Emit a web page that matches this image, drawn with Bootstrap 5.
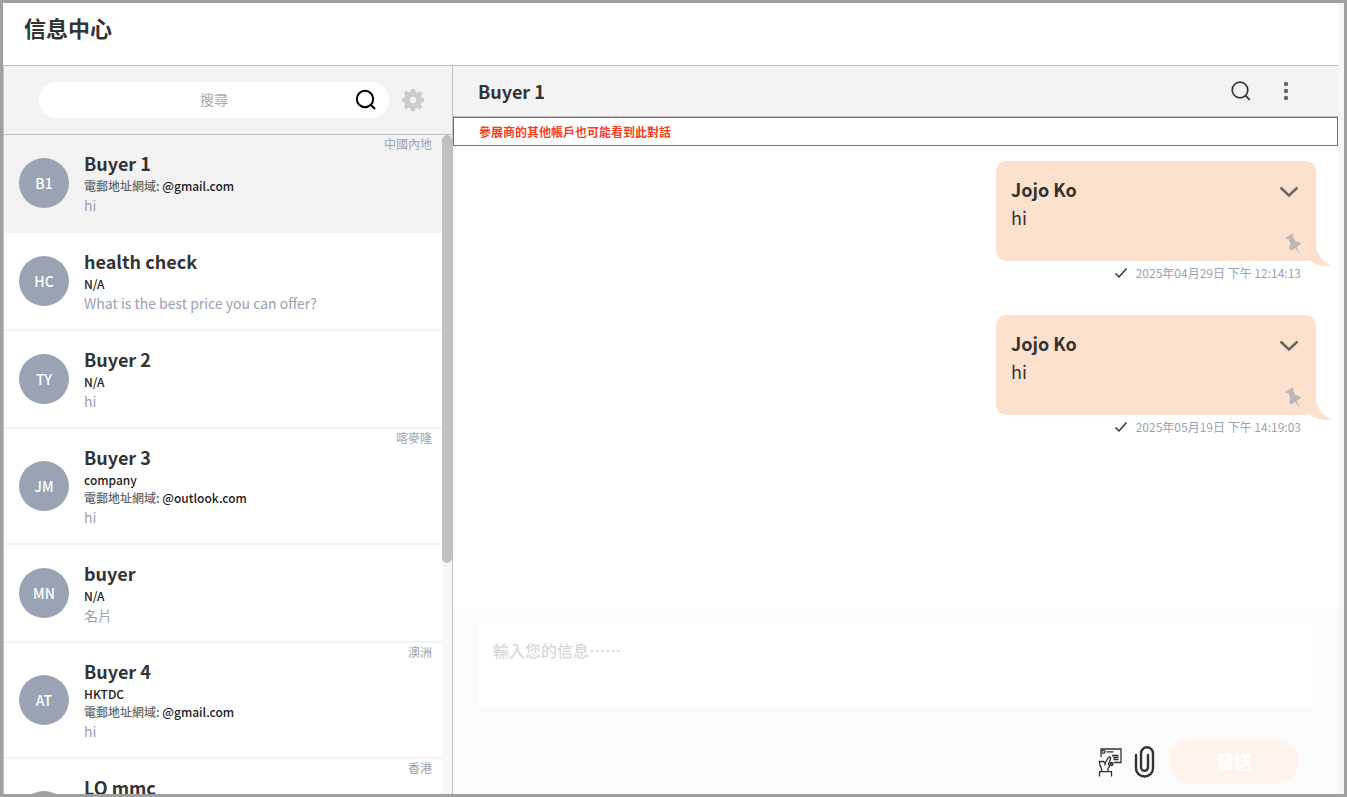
<!DOCTYPE html>
<html lang="zh-Hant">
<head>
<meta charset="utf-8">
<meta name="viewport" content="width=device-width, initial-scale=1">
<title>信息中心</title>
<link href="https://cdn.jsdelivr.net/npm/bootstrap@5.3.0/dist/css/bootstrap.min.css" rel="stylesheet">
<style>
  body { font-family: "Noto Sans CJK TC", sans-serif; color: #333; background: #fff; }
  .app-frame { height: 100vh; border: 3px solid #a0a0a0; }
  .page-track { flex: 0 0 6px; background: #f7f7f7; }
  .page-head { height: 63px; padding: 8px 21px; border-bottom: 1px solid #c1c1c1; }
  .page-head h1 { font-size: 22px; line-height: 32px; font-weight: 700; }
  .side-pane { flex: 0 0 450px; border: solid #c1c1c1; border-width: 0 1px; }
  .search-row { height: 69px; padding: 0 0 0 35px; background: #f3f3f3; border-bottom: 1px solid #c1c1c1; }
  .search-pill { width: 350px; }
  .search-pill input { height: 36px; border: 0; border-radius: 18px; padding: 5px 12px 7px; font-size: 14px; text-align: center; }
  .search-pill input::placeholder { color: #aaa; opacity: 1; }
  .search-pill button { right: 12px; top: 7px; }
  .bare { border: 0; padding: 0; background: none; line-height: 0; }
  .contact { gap: 15px; padding: 14px 15px; border-bottom: 2px solid #f3f3f3; color: #333; text-decoration: none; }
  .contact.current { background: #f3f3f3; }
  .contact-tall { min-height: 116px; }
  .contact-text { padding-bottom: 2px; }
  .avatar { flex: 0 0 50px; height: 50px; border-radius: 50%; background: #99a3b3; color: #fff; font-size: 14px; font-weight: 500; }
  .who { font-size: 18px; line-height: 28px; font-weight: 700; }
  .meta { font-size: 12px; line-height: 18px; font-weight: 500; color: #222; }
  .meta span { color: #666; }
  .last { font-size: 14px; line-height: 20px; color: #9b9fb3; }
  .region { top: 0; right: 10px; font-size: 12px; line-height: 18px; color: #99a3b3; }
  .side-track { flex: 0 0 10px; background: #f7f7f7; }
  .side-thumb { height: 65%; border-radius: 5px; background: #c1c1c1; }
  .chat-head { height: 51px; padding: 0 44px 0 25px; background: #f3f3f3; border-bottom: 1px solid #c1c1c1; }
  .chat-head h2 { font-size: 18px; line-height: 28px; font-weight: 700; }
  .chat-tools { gap: 27px; }
  .notice { border: 1px solid #f5401f; color: #f5401f; padding: 5px 25px 4px; font-size: 12px; line-height: 18px; font-weight: 700; }
  .messages { padding: 15px 22px; }
  .msg { width: 320px; margin-bottom: 30px; }
  .bubble { height: 100px; padding: 14px 15px; border-radius: 10px; background: #fde1cf; }
  .bubble p { font-size: 18px; line-height: 28px; }
  .tail { left: 312px; top: 86px; }
  .toggle { right: 17px; top: 22px; }
  .pin { right: 13px; top: 72px; }
  .stamp { height: 24px; padding-right: 15px; font-size: 12px; color: #99a3b3; }
  .composer { height: 186px; padding: 15px 25px 10px; background: #fbfbfb; }
  .composer textarea { height: 83px; border: 0; border-radius: 4px; padding: 14px 15px; font-size: 16px; line-height: 26px; font-weight: 500; resize: none; }
  .composer textarea::placeholder { color: #d8d8d8; opacity: 1; }
  .composer-tools { gap: 12px; padding-right: 14px; }
  .send { width: 130px; height: 45px; border: 0; border-radius: 23px; background: #fff3ee; color: #fff; font-size: 18px; font-weight: 700; }
</style>
</head>
<body>
<div class="app-frame d-flex overflow-hidden">
  <div class="d-flex flex-column flex-grow-1 overflow-hidden">
    <header class="page-head flex-shrink-0"><h1 class="m-0">信息中心</h1></header>
    <div class="d-flex flex-grow-1 overflow-hidden">
      <aside class="side-pane d-flex flex-column">
        <div class="search-row d-flex align-items-center flex-shrink-0">
          <div class="search-pill position-relative">
            <input class="form-control" type="text" placeholder="搜尋" aria-label="搜尋">
            <button class="bare position-absolute" type="button" aria-label="搜尋">
              <svg width="22" height="22" viewBox="0 0 22 22" fill="none" stroke="#000" stroke-width="2"><circle cx="10" cy="10" r="8.2"/><path d="M15.500 15.500l4.500 4.500"/></svg>
            </button>
          </div>
          <button class="bare ms-2 ps-1" type="button" aria-label="設定">
            <svg width="24" height="24" viewBox="0 0 24 24" fill="#ccc"><path fill-rule="evenodd" d="M10 1h4l.6 2.900 1.700.8 2.600-1.700 2.600 2.600-1.700 2.600.8 1.700L23 10v4l-2.700.6-.7 1.700 1.700 2.600-2.700 2.600-2.500-1.700-1.800.8L13.800 23.200h-3.600l-.6-2.700-1.800-.8-2.500 1.700-2.700-2.600 1.700-2.600-.8-1.700L1 14v-4l2.500-.6.8-1.700-1.700-2.600 2.700-2.600 2.500 1.700 1.700-.8zM12 8.800a3.200 3.200 0 1 0 0 6.400 3.200 3.200 0 0 0 0-6.400z"/></svg>
          </button>
        </div>
        <div class="d-flex flex-grow-1 overflow-hidden">
          <nav class="flex-grow-1 overflow-hidden" aria-label="對話">
            <a href="#" class="contact current position-relative d-flex align-items-center">
              <div class="avatar d-flex align-items-center justify-content-center">B1</div>
              <div class="contact-text"><div class="who">Buyer 1</div><div class="meta"><span>電郵地址網域:</span> @gmail.com</div><div class="last">hi</div></div>
              <div class="region position-absolute">中國內地</div>
            </a>
            <a href="#" class="contact position-relative d-flex align-items-center">
              <div class="avatar d-flex align-items-center justify-content-center">HC</div>
              <div class="contact-text"><div class="who">health check</div><div class="meta">N/A</div><div class="last">What is the best price you can offer?</div></div>
            </a>
            <a href="#" class="contact position-relative d-flex align-items-center">
              <div class="avatar d-flex align-items-center justify-content-center">TY</div>
              <div class="contact-text"><div class="who">Buyer 2</div><div class="meta">N/A</div><div class="last">hi</div></div>
            </a>
            <a href="#" class="contact position-relative d-flex align-items-center">
              <div class="avatar d-flex align-items-center justify-content-center">JM</div>
              <div class="contact-text"><div class="who">Buyer 3</div><div class="meta">company</div><div class="meta"><span>電郵地址網域:</span> @outlook.com</div><div class="last">hi</div></div>
              <div class="region position-absolute">喀麥隆</div>
            </a>
            <a href="#" class="contact position-relative d-flex align-items-center">
              <div class="avatar d-flex align-items-center justify-content-center">MN</div>
              <div class="contact-text"><div class="who">buyer</div><div class="meta">N/A</div><div class="last">名片</div></div>
            </a>
            <a href="#" class="contact position-relative d-flex align-items-center">
              <div class="avatar d-flex align-items-center justify-content-center">AT</div>
              <div class="contact-text"><div class="who">Buyer 4</div><div class="meta">HKTDC</div><div class="meta"><span>電郵地址網域:</span> @gmail.com</div><div class="last">hi</div></div>
              <div class="region position-absolute">澳洲</div>
            </a>
            <a href="#" class="contact contact-tall position-relative d-flex align-items-center">
              <div class="avatar"></div>
              <div class="contact-text align-self-start"><div class="who">LO mmc</div></div>
              <div class="region position-absolute">香港</div>
            </a>
          </nav>
          <div class="side-track"><div class="side-thumb"></div></div>
        </div>
      </aside>

      <main class="d-flex flex-column flex-grow-1 overflow-hidden">
        <div class="chat-head d-flex align-items-center flex-shrink-0">
          <h2 class="m-0 me-auto">Buyer 1</h2>
          <div class="chat-tools d-flex align-items-center">
            <button class="bare" type="button" aria-label="搜尋對話">
              <svg width="20" height="20" viewBox="0 0 20 20" fill="none" stroke="#333" stroke-width="1.700"><circle cx="9" cy="9" r="7.800"/><path d="M14.300 14.300l4.500 4.500"/></svg>
            </button>
            <button class="bare" type="button" aria-label="更多">
              <svg width="16" height="20" viewBox="0 0 16 20" fill="#666"><circle cx="8" cy="3" r="2.200"/><circle cx="8" cy="10" r="2.200"/><circle cx="8" cy="17" r="2.200"/></svg>
            </button>
          </div>
        </div>
        <div class="notice flex-shrink-0">參展商的其他帳戶也可能看到此對話</div>
        <section class="messages d-flex flex-column align-items-end flex-grow-1 overflow-hidden">
          <article class="msg">
            <div class="bubble position-relative">
              <p class="m-0 who">Jojo Ko</p>
              <p class="m-0">hi</p>
              <button class="toggle bare position-absolute" type="button" aria-label="展開"><svg width="20" height="18" viewBox="0 0 20 18" fill="none" stroke="#666" stroke-width="2.500"><path d="M1.500 4.500l8.500 8 8.500-8"/></svg></button>
              <svg class="pin position-absolute" width="18" height="22" viewBox="0 0 18 22" fill="#b8b8b8"><path d="M.5 4.800L8 .5l.8 1.500-1.100 1.600 2.800 4.600c1.900 0 3.700.7 5 2.100v1.200l-4 2.400 4.200 8-5.500-6.800-4.300 2.400-1.200-.9c-.5-1.800-.1-3.900.9-5.400L3.500 6l-2.200.2z"/></svg>
              <svg class="tail position-absolute" width="24" height="20" viewBox="0 0 24 20" fill="#fde1cf"><path d="M8 0C10 8 15 15 23 18.500C15 20 6 18 0 12z"/></svg>
            </div>
            <div class="stamp d-flex align-items-center justify-content-end"><svg class="me-2" width="14" height="12" viewBox="0 0 14 12" fill="none" stroke="#333" stroke-width="1.500"><path d="M1.500 6.500l3.500 3.500 7.500-8.500"/></svg><time>2025年04月29日 下午 12:14:13</time></div>
          </article>
          <article class="msg">
            <div class="bubble position-relative">
              <p class="m-0 who">Jojo Ko</p>
              <p class="m-0">hi</p>
              <button class="toggle bare position-absolute" type="button" aria-label="展開"><svg width="20" height="18" viewBox="0 0 20 18" fill="none" stroke="#666" stroke-width="2.500"><path d="M1.500 4.500l8.500 8 8.500-8"/></svg></button>
              <svg class="pin position-absolute" width="18" height="22" viewBox="0 0 18 22" fill="#b8b8b8"><path d="M.5 4.800L8 .5l.8 1.500-1.100 1.600 2.800 4.600c1.900 0 3.700.7 5 2.100v1.200l-4 2.400 4.200 8-5.500-6.800-4.300 2.400-1.200-.9c-.5-1.800-.1-3.900.9-5.400L3.500 6l-2.200.2z"/></svg>
              <svg class="tail position-absolute" width="24" height="20" viewBox="0 0 24 20" fill="#fde1cf"><path d="M8 0C10 8 15 15 23 18.500C15 20 6 18 0 12z"/></svg>
            </div>
            <div class="stamp d-flex align-items-center justify-content-end"><svg class="me-2" width="14" height="12" viewBox="0 0 14 12" fill="none" stroke="#333" stroke-width="1.500"><path d="M1.500 6.500l3.500 3.500 7.500-8.500"/></svg><time>2025年05月19日 下午 14:19:03</time></div>
          </article>
        </section>
        <form class="composer d-flex flex-column flex-shrink-0">
          <textarea class="form-control" placeholder="輸入您的信息⋯⋯" aria-label="輸入您的信息"></textarea>
          <div class="composer-tools d-flex align-items-center justify-content-end mt-auto">
            <button class="bare" type="button" aria-label="名片">
              <svg width="24" height="30" viewBox="0 0 24 30" fill="none" stroke="#333" stroke-width="1.300"><path d="M3 10V2h20v13.500h-7"/><circle cx="5.500" cy="4.800" r="1.500"/><path d="M8.500 4.800h7M14 8.500h6.500M15 10.500h5.500M15.500 12.500h5"/><path d="M3.500 24v-2.500C1.500 19 1.500 17 1.500 14.500h4l1.500 1.500 3.500-5.500c1-1 2.500-.2 2 1.200L10.500 17l1 2.500-1.500 2V24M1.500 29.500V24.700h12v4.800M6.500 18.500l1.500-3"/><circle cx="13.500" cy="17" r="1.500" fill="#666"/></svg>
            </button>
            <button class="bare" type="button" aria-label="附件">
              <svg width="23" height="32" viewBox="0 0 23 32" fill="none" stroke="#333" stroke-width="2.400" stroke-linecap="round"><path d="M2 9v13.500a8.500 8 0 0 0 17 0V7.500a6 6.200 0 0 0-12 0V21a3.500 3.800 0 0 0 7 0V9"/></svg>
            </button>
            <button class="send" type="submit">發送</button>
          </div>
        </form>
      </main>
    </div>
  </div>
  <div class="page-track"></div>
</div>
<script src="https://cdn.jsdelivr.net/npm/bootstrap@5.3.0/dist/js/bootstrap.bundle.min.js"></script>
</body>
</html>
